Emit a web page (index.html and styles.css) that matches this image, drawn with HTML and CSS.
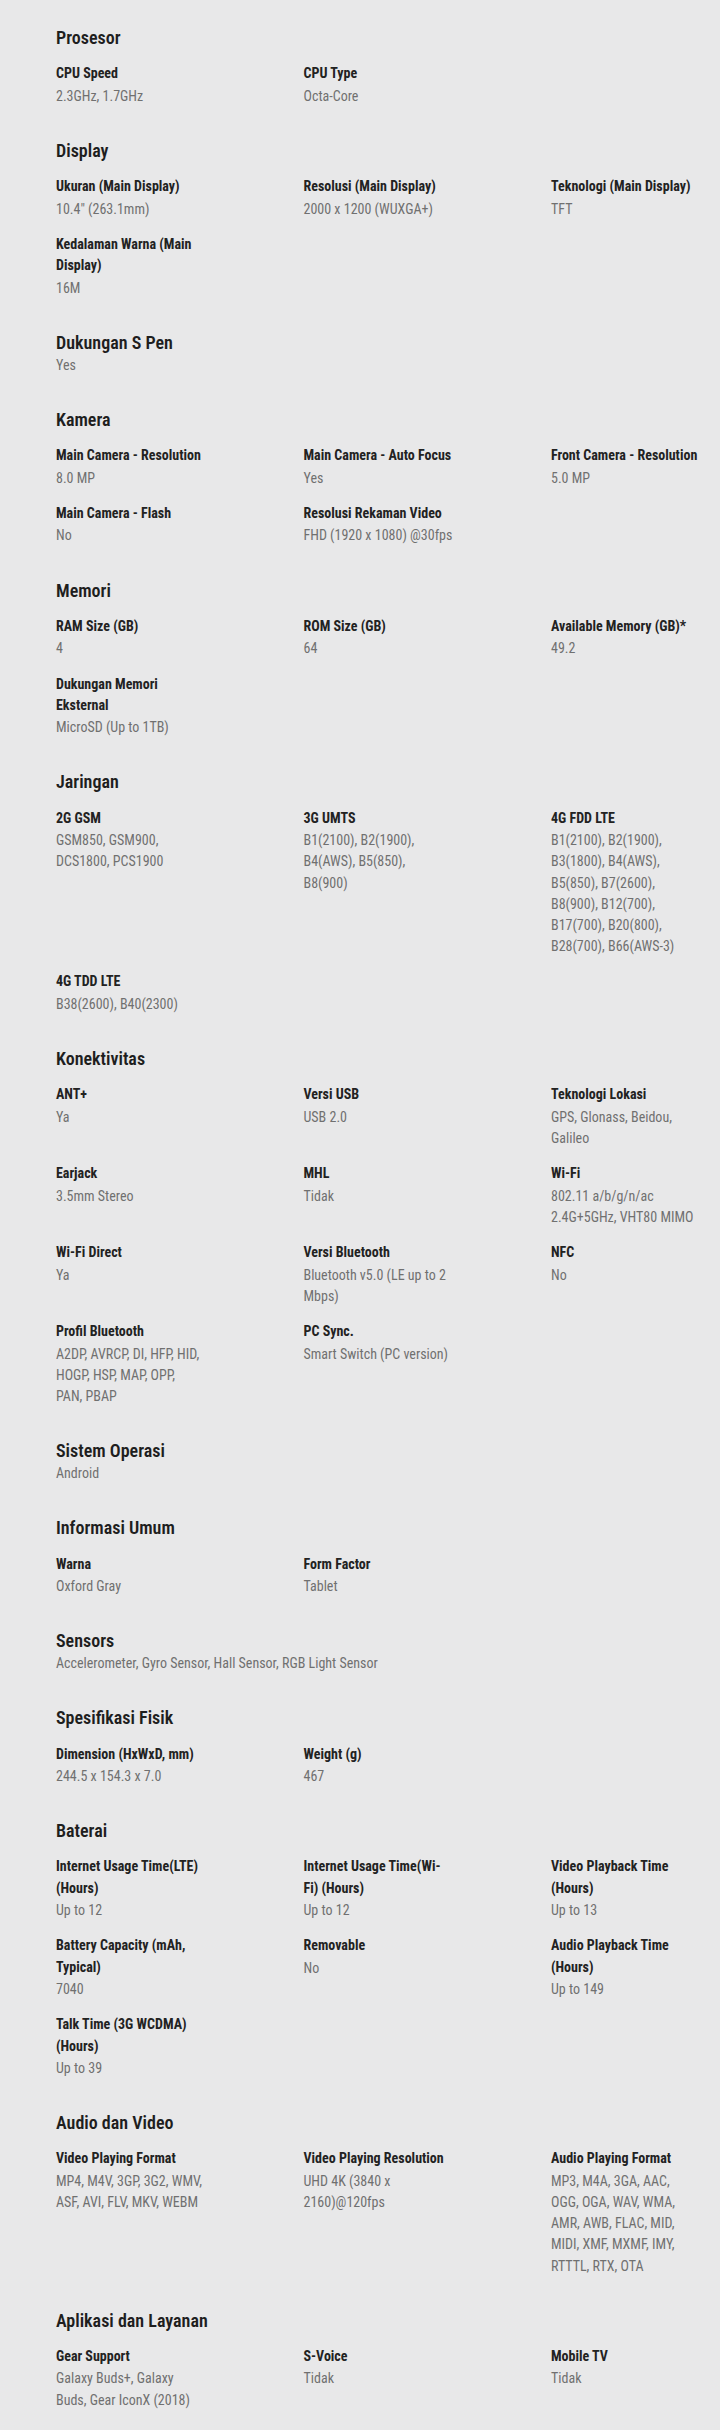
FILE: index.html
```html
<!DOCTYPE html>
<html lang="id">
<head>
<meta charset="utf-8">
<title>Spesifikasi</title>
<link rel="stylesheet" href="styles.css">
</head>
<body>
<main class="specs">

<section class="spec">
  <h2 class="spec-title">Prosesor</h2>
  <dl class="spec-grid">
    <div class="spec-item"><dt>CPU Speed</dt><dd>2.3GHz, 1.7GHz</dd></div>
    <div class="spec-item"><dt>CPU Type</dt><dd>Octa-Core</dd></div>
  </dl>
</section>

<section class="spec">
  <h2 class="spec-title">Display</h2>
  <dl class="spec-grid">
    <div class="spec-item"><dt>Ukuran (Main Display)</dt><dd>10.4" (263.1mm)</dd></div>
    <div class="spec-item"><dt>Resolusi (Main Display)</dt><dd>2000 x 1200 (WUXGA+)</dd></div>
    <div class="spec-item"><dt>Teknologi (Main Display)</dt><dd>TFT</dd></div>
    <div class="spec-item"><dt>Kedalaman Warna (Main Display)</dt><dd>16M</dd></div>
  </dl>
</section>

<section class="spec">
  <h2 class="spec-title">Dukungan S Pen</h2>
  <p class="spec-single">Yes</p>
</section>

<section class="spec">
  <h2 class="spec-title">Kamera</h2>
  <dl class="spec-grid">
    <div class="spec-item"><dt>Main Camera - Resolution</dt><dd>8.0 MP</dd></div>
    <div class="spec-item"><dt class="nowrap">Main Camera - Auto Focus</dt><dd>Yes</dd></div>
    <div class="spec-item"><dt>Front Camera - Resolution</dt><dd>5.0 MP</dd></div>
    <div class="spec-item"><dt>Main Camera - Flash</dt><dd>No</dd></div>
    <div class="spec-item"><dt>Resolusi Rekaman Video</dt><dd class="nowrap">FHD (1920 x 1080) @30fps</dd></div>
  </dl>
</section>

<section class="spec">
  <h2 class="spec-title">Memori</h2>
  <dl class="spec-grid">
    <div class="spec-item"><dt>RAM Size (GB)</dt><dd>4</dd></div>
    <div class="spec-item"><dt>ROM Size (GB)</dt><dd>64</dd></div>
    <div class="spec-item"><dt>Available Memory (GB)*</dt><dd>49.2</dd></div>
    <div class="spec-item"><dt>Dukungan Memori Eksternal</dt><dd>MicroSD (Up to 1TB)</dd></div>
  </dl>
</section>

<section class="spec">
  <h2 class="spec-title">Jaringan</h2>
  <dl class="spec-grid">
    <div class="spec-item"><dt>2G GSM</dt><dd>GSM850, GSM900, DCS1800, PCS1900</dd></div>
    <div class="spec-item"><dt>3G UMTS</dt><dd>B1(2100), B2(1900), B4(AWS), B5(850), B8(900)</dd></div>
    <div class="spec-item"><dt>4G FDD LTE</dt><dd>B1(2100), B2(1900), B3(1800), B4(AWS), B5(850), B7(2600), B8(900), B12(700), B17(700), B20(800), B28(700), B66(AWS-3)</dd></div>
    <div class="spec-item"><dt>4G TDD LTE</dt><dd>B38(2600), B40(2300)</dd></div>
  </dl>
</section>

<section class="spec">
  <h2 class="spec-title">Konektivitas</h2>
  <dl class="spec-grid">
    <div class="spec-item"><dt>ANT+</dt><dd>Ya</dd></div>
    <div class="spec-item"><dt>Versi USB</dt><dd>USB 2.0</dd></div>
    <div class="spec-item"><dt>Teknologi Lokasi</dt><dd>GPS, Glonass, Beidou, Galileo</dd></div>
    <div class="spec-item"><dt>Earjack</dt><dd>3.5mm Stereo</dd></div>
    <div class="spec-item"><dt>MHL</dt><dd>Tidak</dd></div>
    <div class="spec-item"><dt>Wi-Fi</dt><dd>802.11 a/b/g/n/ac 2.4G+5GHz, VHT80 MIMO</dd></div>
    <div class="spec-item"><dt>Wi-Fi Direct</dt><dd>Ya</dd></div>
    <div class="spec-item"><dt>Versi Bluetooth</dt><dd>Bluetooth v5.0 (LE up to 2 Mbps)</dd></div>
    <div class="spec-item"><dt>NFC</dt><dd>No</dd></div>
    <div class="spec-item"><dt>Profil Bluetooth</dt><dd>A2DP, AVRCP, DI, HFP, HID, HOGP, HSP, MAP, OPP, PAN, PBAP</dd></div>
    <div class="spec-item"><dt>PC Sync.</dt><dd>Smart Switch (PC version)</dd></div>
  </dl>
</section>

<section class="spec">
  <h2 class="spec-title">Sistem Operasi</h2>
  <p class="spec-single">Android</p>
</section>

<section class="spec">
  <h2 class="spec-title">Informasi Umum</h2>
  <dl class="spec-grid">
    <div class="spec-item"><dt>Warna</dt><dd>Oxford Gray</dd></div>
    <div class="spec-item"><dt>Form Factor</dt><dd>Tablet</dd></div>
  </dl>
</section>

<section class="spec">
  <h2 class="spec-title">Sensors</h2>
  <p class="spec-single">Accelerometer, Gyro Sensor, Hall Sensor, RGB Light Sensor</p>
</section>

<section class="spec">
  <h2 class="spec-title">Spesifikasi Fisik</h2>
  <dl class="spec-grid">
    <div class="spec-item"><dt>Dimension (HxWxD, mm)</dt><dd>244.5 x 154.3 x 7.0</dd></div>
    <div class="spec-item"><dt>Weight (g)</dt><dd>467</dd></div>
  </dl>
</section>

<section class="spec">
  <h2 class="spec-title">Baterai</h2>
  <dl class="spec-grid">
    <div class="spec-item"><dt>Internet Usage Time(LTE) (Hours)</dt><dd>Up to 12</dd></div>
    <div class="spec-item"><dt>Internet Usage Time(Wi-Fi) (Hours)</dt><dd>Up to 12</dd></div>
    <div class="spec-item"><dt>Video Playback Time (Hours)</dt><dd>Up to 13</dd></div>
    <div class="spec-item"><dt>Battery Capacity (mAh, Typical)</dt><dd>7040</dd></div>
    <div class="spec-item"><dt>Removable</dt><dd>No</dd></div>
    <div class="spec-item"><dt>Audio Playback Time (Hours)</dt><dd>Up to 149</dd></div>
    <div class="spec-item"><dt>Talk Time (3G WCDMA) (Hours)</dt><dd>Up to 39</dd></div>
  </dl>
</section>

<section class="spec">
  <h2 class="spec-title">Audio dan Video</h2>
  <dl class="spec-grid">
    <div class="spec-item"><dt>Video Playing Format</dt><dd>MP4, M4V, 3GP, 3G2, WMV, ASF, AVI, FLV, MKV, WEBM</dd></div>
    <div class="spec-item"><dt>Video Playing Resolution</dt><dd>UHD 4K (3840 x 2160)@120fps</dd></div>
    <div class="spec-item"><dt>Audio Playing Format</dt><dd>MP3, M4A, 3GA, AAC, OGG, OGA, WAV, WMA, AMR, AWB, FLAC, MID, MIDI, XMF, MXMF, IMY, RTTTL, RTX, OTA</dd></div>
  </dl>
</section>

<section class="spec">
  <h2 class="spec-title">Aplikasi dan Layanan</h2>
  <dl class="spec-grid">
    <div class="spec-item"><dt>Gear Support</dt><dd>Galaxy Buds+, Galaxy Buds, Gear IconX (2018)</dd></div>
    <div class="spec-item"><dt>S-Voice</dt><dd>Tidak</dd></div>
    <div class="spec-item"><dt>Mobile TV</dt><dd>Tidak</dd></div>
  </dl>
</section>

</main>
</body>
</html>
```

FILE: styles.css
```css
html, body {
  margin: 0;
  padding: 0;
}

body {
  background: #e8e8e9;
  font-family: "Roboto Condensed", "Liberation Sans Narrow", "DejaVu Sans Condensed", Roboto, sans-serif;
  color: #222;
}

.specs {
  padding: 27px 0 0 56px;
}

.spec {
  padding-bottom: 33px;
}

.spec-title {
  margin: 0;
  font-size: 18px;
  line-height: 22px;
  font-weight: 600;
  color: #1e1e1e;
}

.spec-single {
  margin: 1px 0 0;
  font-size: 14px;
  line-height: 21.15px;
  color: #707070;
}

.spec-grid {
  margin: 14.3px 0 0;
  display: grid;
  grid-template-columns: repeat(3, 147.5px);
  column-gap: 100px;
  row-gap: 14.2px;
}

.spec-item dt {
  font-size: 14px;
  line-height: 21.15px;
  font-weight: 700;
  color: #222;
}

.spec-item dd {
  margin: 1.3px 0 0;
  font-size: 14px;
  line-height: 21.15px;
  color: #707070;
}

.nowrap {
  white-space: nowrap;
}
```
